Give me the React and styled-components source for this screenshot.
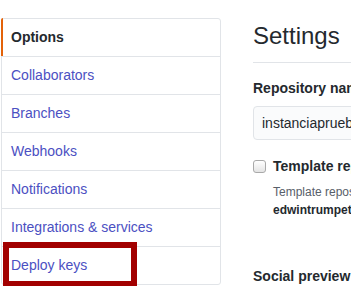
import React from "react";
import styled, { createGlobalStyle } from "styled-components";

const Global = createGlobalStyle`
  html, body {
    margin: 0;
    padding: 0;
    background: #ffffff;
    overflow: hidden;
  }
  body {
    font-family: "Liberation Sans", Arial, sans-serif;
    color: #24292e;
  }
`;

const Page = styled.div`
  display: flex;
  align-items: flex-start;
  gap: 32px;
  padding: 18px 0 0 1px;
  width: 1000px;
`;

const Menu = styled.nav`
  width: 220px;
  flex-shrink: 0;
  box-sizing: border-box;
  border: 1px solid #e1e4e8;
  border-radius: 3px;
  background: #fff;
`;

const MenuItem = styled.a`
  position: relative;
  display: block;
  box-sizing: border-box;
  height: 38px;
  padding: 0 9px;
  border-top: 1px solid #e1e4e8;
  font-size: 14px;
  line-height: 37px;
  color: ${(p) => (p.$selected ? "#24292e" : "#4b50c2")};
  font-weight: ${(p) => (p.$selected ? 700 : 400)};
  text-decoration: none;
  white-space: nowrap;

  &:first-child {
    border-top: 0;
    height: 37px;
  }

  ${(p) =>
    p.$selected &&
    `
    &::before {
      content: "";
      position: absolute;
      left: -1px;
      top: -1px;
      bottom: 0;
      width: 2px;
      background: #e36209;
      border-top-left-radius: 3px;
    }
  `}
`;

const Highlight = styled.span`
  position: absolute;
  left: 1px;
  top: -5px;
  width: 134px;
  height: 45px;
  box-sizing: border-box;
  border: 6px solid #a20000;
  pointer-events: none;
`;

const Main = styled.main`
  width: 640px;
  flex-shrink: 0;
`;

const Subhead = styled.h2`
  margin: 3px 0 15px;
  padding-bottom: 11px;
  border-bottom: 1px solid #e1e4e8;
  font-size: 24px;
  line-height: 30px;
  font-weight: 400;
  color: #24292e;
`;

const FieldLabel = styled.label`
  display: block;
  margin-bottom: 8px;
  font-size: 14px;
  line-height: 20px;
  font-weight: 700;
`;

const TextInput = styled.div`
  box-sizing: border-box;
  width: 440px;
  height: 34px;
  padding: 0 8px;
  border: 1px solid #e1e4e8;
  border-radius: 4px;
  background: #fafbfc;
  font-size: 14px;
  line-height: 32px;
  color: #24292e;
  white-space: nowrap;
`;

const CheckRow = styled.div`
  display: flex;
  align-items: flex-start;
  margin-top: 16px;
`;

const CheckBox = styled.span`
  width: 13px;
  height: 13px;
  box-sizing: border-box;
  margin-top: 4px;
  margin-right: 7px;
  flex-shrink: 0;
  border: 1px solid #a9a9a9;
  border-radius: 3px;
  background: linear-gradient(#ffffff, #e4e4e4);
`;

const CheckBody = styled.div`
  display: flex;
  flex-direction: column;
`;

const CheckLabel = styled.span`
  font-size: 14px;
  line-height: 20px;
  font-weight: 700;
  white-space: nowrap;
`;

const Note = styled.p`
  margin: 7px 0 0;
  font-size: 12px;
  line-height: 18px;
  color: #586069;
  white-space: nowrap;
`;

const NoteStrong = styled.p`
  margin: 0;
  font-size: 12px;
  line-height: 18px;
  font-weight: 700;
  color: #24292e;
  white-space: nowrap;
`;

const SectionTitle = styled.h3`
  margin: 47px 0 0;
  font-size: 14px;
  line-height: 20px;
  font-weight: 700;
`;

const items = [
  "Options",
  "Collaborators",
  "Branches",
  "Webhooks",
  "Notifications",
  "Integrations & services",
  "Deploy keys",
];

export default function App() {
  return (
    <>
      <Global />
      <Page>
        <Menu>
          {items.map((label, i) => (
            <MenuItem key={label} href="#" $selected={i === 0}>
              {label}
              {label === "Deploy keys" && <Highlight />}
            </MenuItem>
          ))}
        </Menu>
        <Main>
          <Subhead>Settings</Subhead>
          <FieldLabel>Repository name</FieldLabel>
          <TextInput>instanciapruebagit</TextInput>
          <CheckRow>
            <CheckBox />
            <CheckBody>
              <CheckLabel>Template repository</CheckLabel>
              <Note>
                Template repositories let users generate new repositories with
                the same directory structure and files.
              </Note>
              <NoteStrong>edwintrumpet/instanciapruebagit</NoteStrong>
            </CheckBody>
          </CheckRow>
          <SectionTitle>Social preview</SectionTitle>
        </Main>
      </Page>
    </>
  );
}
